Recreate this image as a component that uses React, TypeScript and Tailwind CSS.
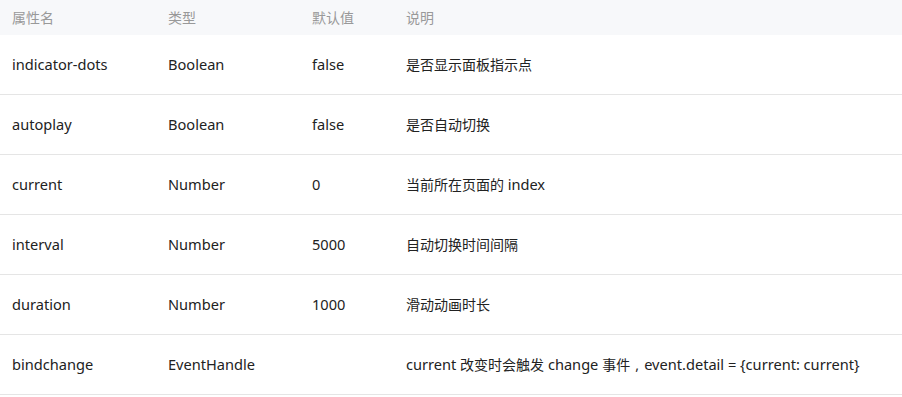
import React from "react";

const L = ({ children }: { children: React.ReactNode }) => (
  <span className="text-[14.6px]">{children}</span>
);

const rows: [string, string, string, React.ReactNode][] = [
  ["indicator-dots", "Boolean", "false", "是否显示面板指示点"],
  ["autoplay", "Boolean", "false", "是否自动切换"],
  ["current", "Number", "0", <>当前所在页面的 <L>index</L></>],
  ["interval", "Number", "5000", "自动切换时间间隔"],
  ["duration", "Number", "1000", "滑动动画时长"],
  [
    "bindchange",
    "EventHandle",
    "",
    <>
      <L>current </L>改变时会触发<L> change </L>事件<span className="inline-block w-[14px] text-center">,</span>
      <L>event.detail = {"{current: current}"}</L>
    </>,
  ],
];

export default function App() {
  return (
    <div
      className="w-[902px] h-[397px] bg-white text-[14px] text-[#222]"
      style={{ fontFamily: '"Noto Sans", "Noto Sans CJK SC", sans-serif' }}
    >
      <div className="grid grid-cols-[168px_144px_94px_1fr] h-[35px] pb-[1px] items-center bg-[#f7f8fa] text-[#999]">
        <div className="pl-[12px]">属性名</div>
        <div>类型</div>
        <div>默认值</div>
        <div>说明</div>
      </div>
      {rows.map((r) => (
        <div
          key={r[0]}
          className="grid grid-cols-[168px_144px_94px_1fr] h-[60px] items-center border-b border-[#e5e5e5]"
        >
          <div className="pl-[12px]"><L>{r[0]}</L></div>
          <div><L>{r[1]}</L></div>
          <div><L>{r[2]}</L></div>
          <div>{r[3]}</div>
        </div>
      ))}
    </div>
  );
}
